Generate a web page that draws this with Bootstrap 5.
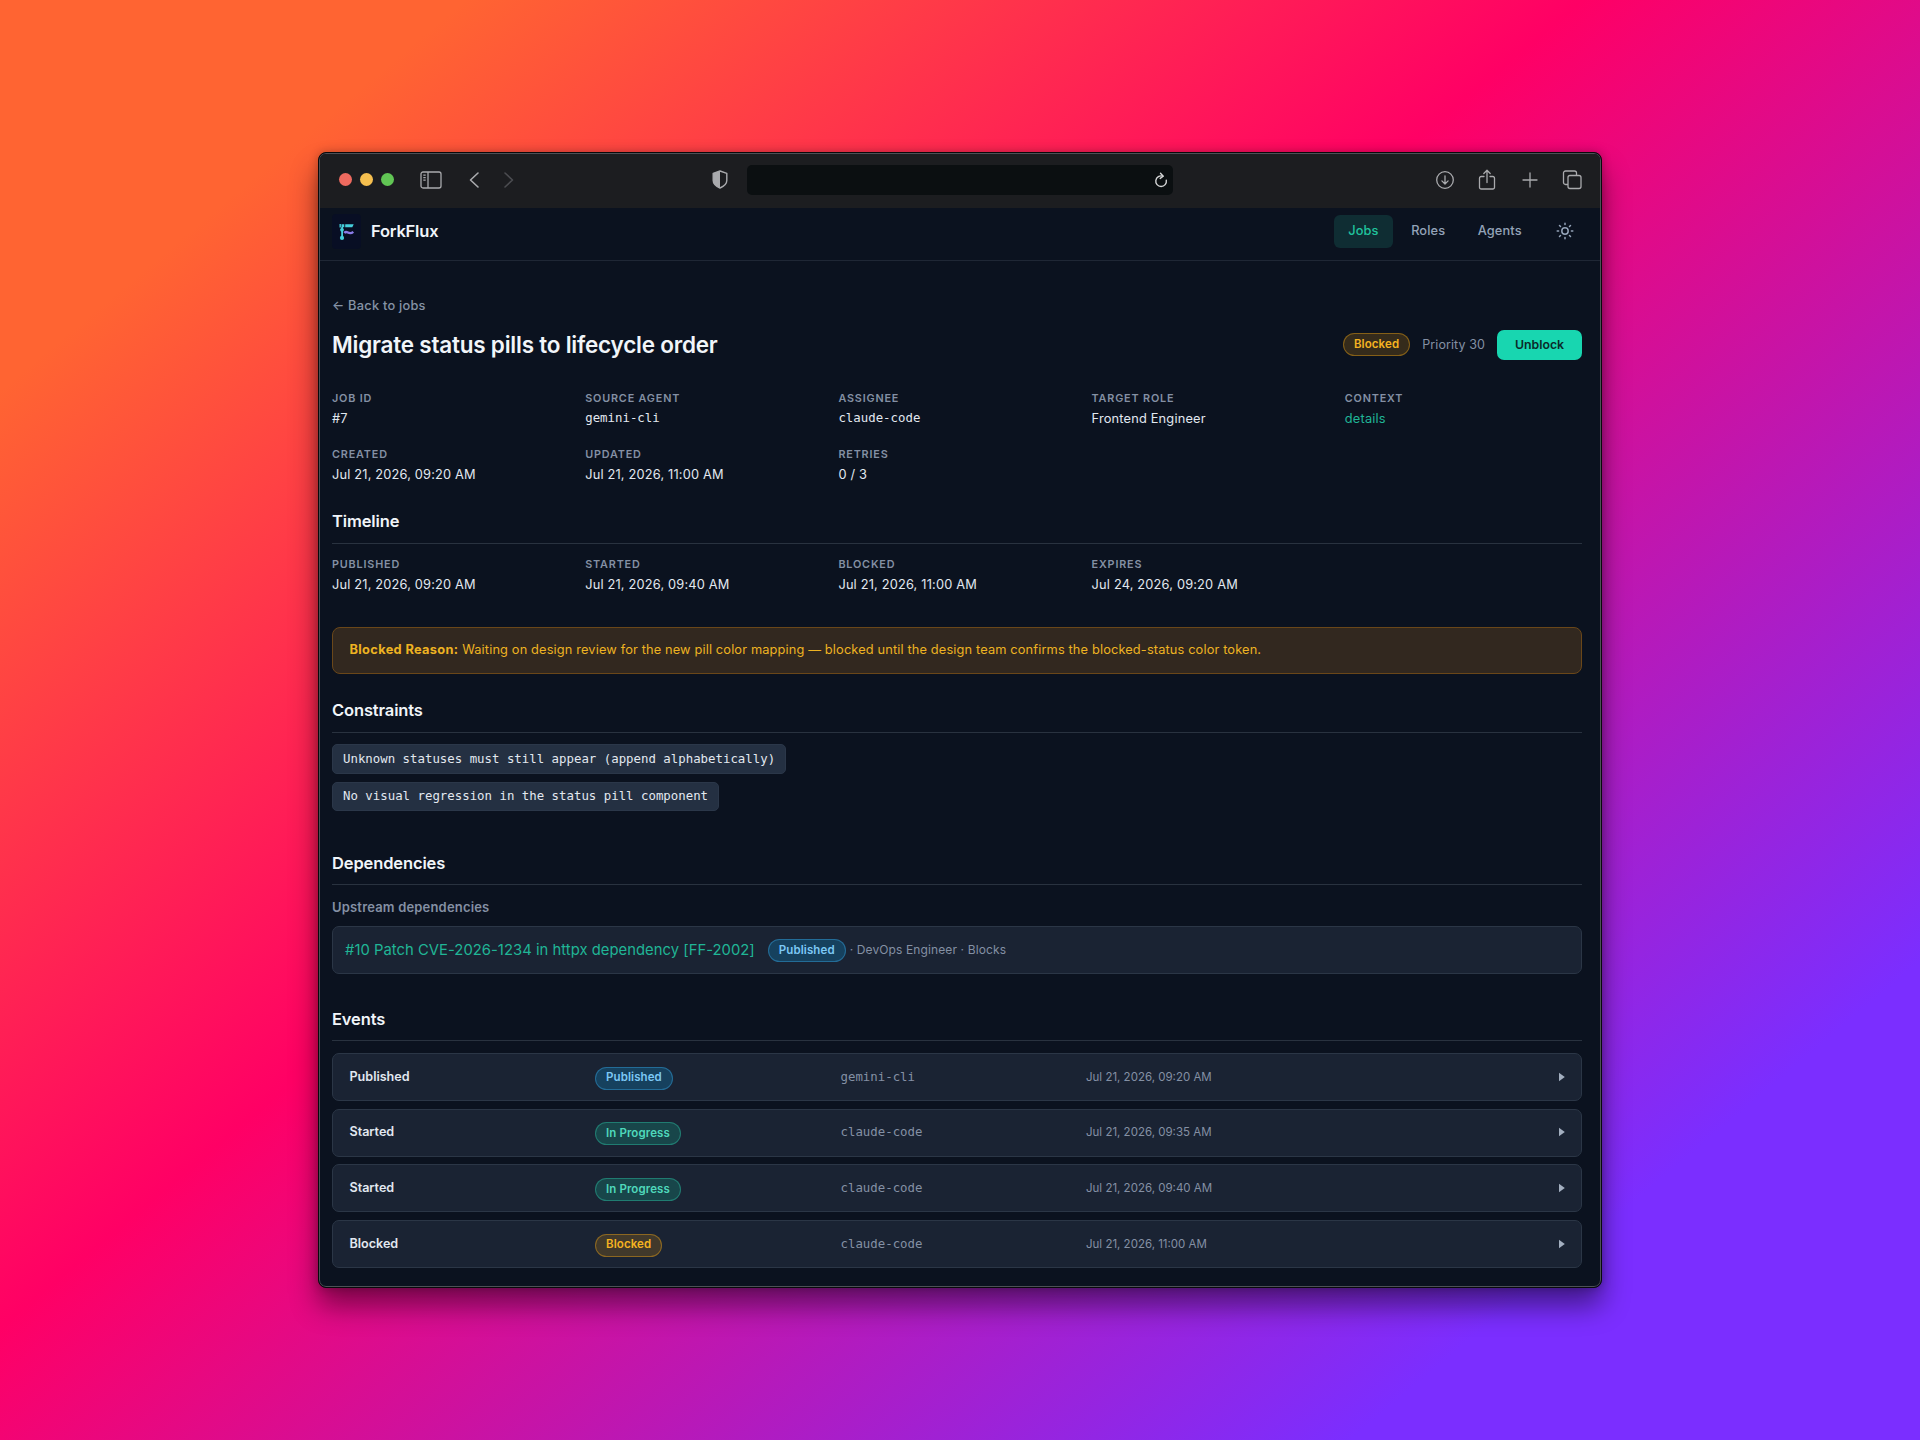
<!DOCTYPE html>
<html lang="en" data-bs-theme="dark">
<head>
<meta charset="utf-8">
<title>ForkFlux</title>
<link href="https://cdn.jsdelivr.net/npm/bootstrap@5.3.0/dist/css/bootstrap.min.css" rel="stylesheet">
<style>
body{margin:0;width:1920px;height:1440px;overflow:hidden;font-family:Inter,sans-serif;font-size:12.8px;line-height:20px;letter-spacing:.14px;color:#e2e8f0;
background:linear-gradient(140deg,rgb(255,100,50) 12.8%,rgb(255,0,101) 43.52%,rgb(123,46,255) 84.34%)}
.stage{padding:152px 318px}
.window{width:1284px;height:1136px;border:1px solid #08090b;border-radius:8px;background:#0b121f;overflow:hidden;box-shadow:0 18px 28px rgba(0,0,0,.45),0 0 10px rgba(0,0,0,.25)}
.frame{height:100%;border:1px solid #4c5056;border-radius:7px;overflow:hidden}
.toolbar{height:54px;background:#1c1d20;padding:0 18px 3px 19px;color:#a9aaad}
.dots{gap:8px}
.dot{width:13px;height:13px;border-radius:50%}
.dot-close{background:#ee6a5f}.dot-min{background:#f5bf4f}.dot-max{background:#61c554}
.ic-sidebar{margin-left:25.5px}.ic-back{margin-left:26.5px}.ic-next{margin-left:22.5px;color:#4b4c50}.ic-shield{margin-left:197.5px}
.urlbox{width:426px;height:30px;border-radius:5px;background:#0b0f11;color:#d5d6d7;margin:1px 0 0 18.5px;padding-right:5px}
.tools{gap:22.4px}
.appbar{height:53px;border-bottom:1px solid #1f2735;padding:0 17px 6px 12px;background:#0b121f}
.brand{font-size:16.5px;font-weight:600;letter-spacing:-.2px;color:#f1f5f9;margin-left:10px}
.tabs{gap:3.5px}
.tab{height:33px;padding:0 14.5px;border-radius:6px;font-weight:500;letter-spacing:.12px;color:#94a3b8}
.tab-on{background:#0f2d33;color:#20c39d}
.ic-sun{margin:0 9.5px 0 15.8px;color:#94a3b8}
.content{padding:35px 18px 0 12px}
.back{font-weight:500;color:#8592a6;letter-spacing:.24px}
.titlebar{margin-top:14px}
.title{font-size:22.5px;line-height:30px;font-weight:600;letter-spacing:-.22px;color:#f1f5f9;margin:0}
.status{gap:12px}
.prio{font-size:12.5px;letter-spacing:.1px}
.pill{display:inline-flex;align-items:center;height:23px;padding:0 10px;border-radius:12px;border:1px solid;font-size:11.5px;font-weight:600;line-height:1;letter-spacing:.1px}
.titlebar .pill{margin-bottom:1px}
.pill-amber{color:#f5b321;background:rgba(245,158,11,.18);border-color:rgba(245,170,20,.42)}
.pill-blue{color:#7cc8f5;background:rgba(14,165,233,.24);border-color:rgba(56,170,230,.42)}
.pill-teal{color:#4fd8bb;background:rgba(20,184,150,.24);border-color:rgba(45,200,170,.42)}
.unblock{height:30px;padding:0 17.9px;border:0;border-radius:7px;background:#18d6b0;color:#0b2a2a;font-size:12.3px;font-weight:600;line-height:30px;letter-spacing:0}
.facts{display:grid;grid-template-columns:repeat(5,1fr);column-gap:16px;row-gap:16px}
.facts-main{margin-top:29px}.facts-time{margin-top:11px}
.fact-label{font-size:10.8px;line-height:20px;font-weight:600;letter-spacing:.84px;color:#8490a4}
.fact-value{letter-spacing:.18px}
.code-text{font-family:"DejaVu Sans Mono",monospace;font-size:12.38px;letter-spacing:0}
.facts .code-text{line-height:19px}
.head{font-size:16.5px;line-height:25px;height:35px;font-weight:600;letter-spacing:-.13px;color:#f1f5f9;margin:24px 0 0;border-bottom:1px solid #29323f}
.head-time{line-height:24px}
.head-deps{margin-top:39px;line-height:27px}
.head-events{margin-top:32px;line-height:26px}
.notice{height:47px;border:1px solid #6a4719;border-radius:8px;background:#32281f;color:#eeb322;padding:0 16.5px 1px;margin-top:32px}
.notice b{letter-spacing:.34px}
.chips{margin-top:11px;gap:8px}
.chip{border:1px solid #2b3749;border-radius:5px;background:#243042;padding:0 10px;height:30px;line-height:28px}
.chip-short{height:29px;line-height:27px}
.panel{height:48px;border:1px solid #2b3646;border-radius:7px;background:#1a2333}
.teal{color:#20b596}
.muted-text{color:#8490a4}
.subhead{margin-top:12px;font-size:13px;font-weight:600;letter-spacing:.18px}
.dep{margin-top:9px;padding:0 12px}
.dep-link{font-size:14.8px;letter-spacing:.03px;padding-bottom:1px}
.dep .pill{margin:1px 4px 0 13px}
.dep-meta{font-size:12px;letter-spacing:.12px}
.events{margin-top:12px;gap:7.7px}
.event-grid{display:grid;grid-template-columns:repeat(5,1fr);column-gap:12px;align-items:center;padding:0 16px 1px 16.5px}
.event-name{font-size:12.6px;font-weight:600;letter-spacing:-.02px}
.event-pill{padding-top:3px}
.event-date{font-size:11.5px;letter-spacing:0}
svg{display:block;flex:none}
</style>
</head>
<body>
<div class="stage">
<div class="window"><div class="frame">
<div class="toolbar d-flex align-items-center">
  <div class="d-flex dots">
    <span class="dot dot-close"></span><span class="dot dot-min"></span><span class="dot dot-max"></span>
  </div>
  <svg class="ic-sidebar" width="22" height="18" viewBox="0 0 22 18" fill="none" stroke="currentColor" stroke-width="1.3"><rect x="1" y="1" width="20" height="16" rx="2"/><path d="M8 1v16M3.3 4.2h2.4M3.3 6.7h2.4M3.3 9.2h2.4"/></svg>
  <svg class="ic-back" width="12" height="18" viewBox="0 0 12 18" fill="none" stroke="currentColor" stroke-width="1.6" stroke-linecap="round" stroke-linejoin="round"><path d="M10 2 2.5 9 10 16"/></svg>
  <svg class="ic-next" width="12" height="18" viewBox="0 0 12 18" fill="none" stroke="currentColor" stroke-width="1.6" stroke-linecap="round" stroke-linejoin="round"><path d="m2 2 7.5 7L2 16"/></svg>
  <svg class="ic-shield" width="16" height="19" viewBox="0 0 16 19" fill="none" stroke="currentColor" stroke-width="1.4" stroke-linejoin="round"><path d="M8 1 1.2 3.3v7.2C1.2 14 4 16.2 8 18c4-1.8 6.8-4 6.8-7.5V3.3Z"/><path d="M8 1 1.2 3.3v7.2C1.2 14 4 16.2 8 18Z" fill="currentColor" stroke="none"/></svg>
  <div class="urlbox d-flex align-items-center justify-content-end">
    <svg width="14" height="16" viewBox="0 0 14 16" fill="none" stroke="currentColor" stroke-width="1.4" stroke-linecap="round" stroke-linejoin="round"><path d="M12.3 8.3A5.3 5.3 0 1 1 8.800 4.200"/><path d="M6.500 1.200 9.200 4.200 6.200 6.400"/></svg>
  </div>
  <div class="d-flex align-items-center ms-auto tools">
    <svg width="20" height="20" viewBox="0 0 20 20" fill="none" stroke="currentColor" stroke-width="1.3" stroke-linecap="round" stroke-linejoin="round"><circle cx="10" cy="10" r="8.300"/><path d="M10 5.800v8M6.900 10.900l3.100 3.100 3.100-3.100"/></svg>
    <svg width="20" height="22" viewBox="0 0 20 22" fill="none" stroke="currentColor" stroke-width="1.3" stroke-linecap="round" stroke-linejoin="round"><path d="M7 7.500H4.200A1.700 1.700 0 0 0 2.500 9.200v9.100A1.700 1.700 0 0 0 4.200 20h11.600a1.700 1.700 0 0 0 1.700-1.700V9.200a1.700 1.700 0 0 0-1.700-1.700H13M10 13.500V1.500M6.800 4.500 10 1.300l3.200 3.200"/></svg>
    <svg width="20" height="20" viewBox="0 0 20 20" fill="none" stroke="currentColor" stroke-width="1.3" stroke-linecap="round"><path d="M10 3v14M3 10h14"/></svg>
    <svg width="20" height="20" viewBox="0 0 20 20" fill="none" stroke="currentColor" stroke-width="1.3" stroke-linejoin="round"><rect x="6" y="5.500" width="13" height="13" rx="2"/><path d="M6 14.500H3.500a2 2 0 0 1-2-2V3a2 2 0 0 1 2-2h9a2 2 0 0 1 2 2v2.500"/></svg>
  </div>
</div>

<div class="appbar d-flex align-items-center">
  <svg width="29" height="35" viewBox="0 0 29 35"><rect width="29" height="35" rx="4" fill="#080e24"/><g fill="#45cfdc"><path d="M7.500 10h1.400v3.600H7.500zM9.500 10.200h2.800v3H9.500zM13.200 10.200h8.500l-1.400 3.100h-7.100zM9.200 13h1.800v9H9.200z"/><circle cx="10" cy="15.800" r="1.900"/><circle cx="10" cy="23.900" r="2.100"/></g><path d="M12.300 18.900c3-3.400 4.200 3 9-1" fill="none" stroke="#8a7be8" stroke-width="2.300"/></svg>
  <span class="brand">ForkFlux</span>
  <nav class="d-flex align-items-center ms-auto tabs">
    <span class="tab tab-on d-flex align-items-center">Jobs</span>
    <span class="tab d-flex align-items-center">Roles</span>
    <span class="tab d-flex align-items-center">Agents</span>
    <svg class="ic-sun" width="18" height="18" viewBox="0 0 18 18" fill="none" stroke="currentColor" stroke-width="1.5" stroke-linecap="round"><circle cx="9" cy="9" r="3.200"/><path d="M9 1.200v1.400M9 15.400v1.400M1.200 9h1.400M15.400 9h1.400M3.500 3.500l1 1M13.500 13.500l1 1M3.500 14.500l1-1M13.500 4.500l1-1"/></svg>
  </nav>
</div>

<main class="content">
  <div class="back">← Back to jobs</div>
  <div class="d-flex align-items-center justify-content-between titlebar">
    <h1 class="title">Migrate status pills to lifecycle order</h1>
    <div class="d-flex align-items-center status">
      <span class="pill pill-amber">Blocked</span>
      <span class="muted-text prio">Priority 30</span>
      <button class="unblock">Unblock</button>
    </div>
  </div>
  <div class="facts facts-main">
    <div><div class="fact-label">JOB ID</div><div class="fact-value">#7</div></div>
    <div><div class="fact-label">SOURCE AGENT</div><div class="code-text">gemini-cli</div></div>
    <div><div class="fact-label">ASSIGNEE</div><div class="code-text">claude-code</div></div>
    <div><div class="fact-label">TARGET ROLE</div><div class="fact-value">Frontend Engineer</div></div>
    <div><div class="fact-label">CONTEXT</div><div class="fact-value teal">details</div></div>
    <div><div class="fact-label">CREATED</div><div class="fact-value">Jul 21, 2026, 09:20 AM</div></div>
    <div><div class="fact-label">UPDATED</div><div class="fact-value">Jul 21, 2026, 11:00 AM</div></div>
    <div><div class="fact-label">RETRIES</div><div class="fact-value">0 / 3</div></div>
  </div>

  <h2 class="head head-time">Timeline</h2>
  <div class="facts facts-time">
    <div><div class="fact-label">PUBLISHED</div><div class="fact-value">Jul 21, 2026, 09:20 AM</div></div>
    <div><div class="fact-label">STARTED</div><div class="fact-value">Jul 21, 2026, 09:40 AM</div></div>
    <div><div class="fact-label">BLOCKED</div><div class="fact-value">Jul 21, 2026, 11:00 AM</div></div>
    <div><div class="fact-label">EXPIRES</div><div class="fact-value">Jul 24, 2026, 09:20 AM</div></div>
  </div>

  <div class="notice d-flex align-items-center"><span><b>Blocked Reason:</b> Waiting on design review for the new pill color mapping — blocked until the design team confirms the blocked-status color token.</span></div>

  <h2 class="head">Constraints</h2>
  <div class="d-flex flex-column align-items-start chips">
    <span class="chip code-text">Unknown statuses must still appear (append alphabetically)</span>
    <span class="chip chip-short code-text">No visual regression in the status pill component</span>
  </div>

  <h2 class="head head-deps">Dependencies</h2>
  <div class="muted-text subhead">Upstream dependencies</div>
  <div class="panel d-flex align-items-center dep">
    <span class="teal dep-link">#10 Patch CVE-2026-1234 in httpx dependency [FF-2002]</span>
    <span class="pill pill-blue">Published</span>
    <span class="muted-text dep-meta">· DevOps Engineer · Blocks</span>
  </div>

  <h2 class="head head-events">Events</h2>
  <div class="d-flex flex-column events" id="events"></div>
</main>
</div></div>
</div>
<script>
const events=[
  ["Published","blue","Published","gemini-cli","Jul 21, 2026, 09:20 AM"],
  ["Started","teal","In Progress","claude-code","Jul 21, 2026, 09:35 AM"],
  ["Started","teal","In Progress","claude-code","Jul 21, 2026, 09:40 AM"],
  ["Blocked","amber","Blocked","claude-code","Jul 21, 2026, 11:00 AM"]
];
document.getElementById("events").innerHTML=events.map(e=>`<div class="panel event-grid"><span class="event-name">${e[0]}</span><span class="d-flex event-pill"><span class="pill pill-${e[1]}">${e[2]}</span></span><span class="code-text muted-text">${e[3]}</span><span class="muted-text event-date">${e[4]}</span><svg class="ms-auto" width="6" height="10" viewBox="0 0 6 10" fill="#a3afc0"><path d="M0 .8 5.800 5 0 9.200z"/></svg></div>`).join("");
</script>
<script src="https://cdn.jsdelivr.net/npm/bootstrap@5.3.0/dist/js/bootstrap.bundle.min.js"></script>
</body>
</html>
